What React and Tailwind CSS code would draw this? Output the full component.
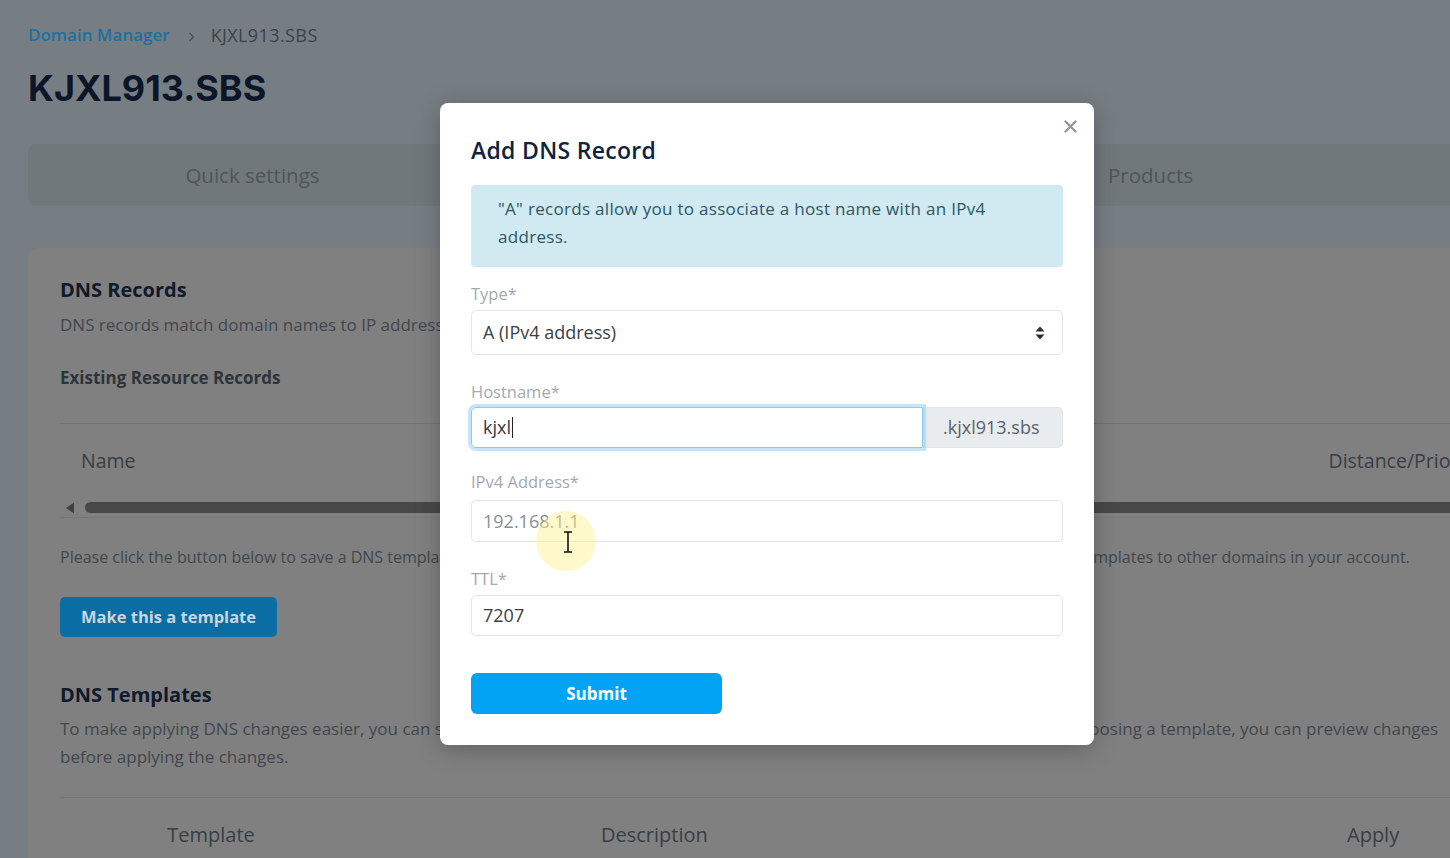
import { useState } from 'react'

const FONT = "font-['Open_Sans','Noto_Sans',sans-serif]"

function CloseIcon() {
  return (
    <svg width="13" height="13" viewBox="0 0 13 13" className="text-[#8f97a1]">
      <path d="M1.5 1.5 L11.5 11.5 M11.5 1.5 L1.5 11.5" stroke="currentColor" strokeWidth="2.4" strokeLinecap="round" />
    </svg>
  )
}

function SortCaret() {
  return (
    <svg width="10" height="14" viewBox="0 0 10 14" className="text-[#2b2f33]">
      <path d="M5 0.5 L9.5 5.5 H0.5 Z" fill="currentColor" />
      <path d="M5 13.5 L9.5 8.5 H0.5 Z" fill="currentColor" />
    </svg>
  )
}

function Field({ label, className, labelGap, children }) {
  return (
    <div className={`flex flex-col ${className}`}>
      <label className={`text-[16.5px] leading-[20px] text-[#a2a9b1] ${labelGap}`}>{label}</label>
      {children}
    </div>
  )
}

export default function App() {
  const [ttl, setTtl] = useState('7207')

  return (
    <div className={`relative w-full h-[858px] overflow-hidden bg-[#777e83] ${FONT}`}>
      {/* page behind the dialog, shown dimmed */}
      <div className="w-[1900px] pl-[28px] pt-[24px] flex flex-col">
        <div className="flex items-center text-[17px] leading-[22px]">
          <span className="text-[#1f6f9e] font-semibold">Domain Manager</span>
          <svg width="7" height="10" viewBox="0 0 7 10" className="ml-[18px] mr-[16px] mt-[3px] text-[#4a5056]">
            <path d="M1.5 1 L5.5 5 L1.5 9" stroke="currentColor" strokeWidth="1.4" fill="none" />
          </svg>
          <span className="text-[#3c4248] text-[18px] tracking-[0.4px]">KJXL913.SBS</span>
        </div>
        <h1 className="mt-[20px] text-[36px] leading-[44px] font-bold text-[#0c1629] font-['Inter',sans-serif]">KJXL913.SBS</h1>

        <div className="mt-[34px] w-[1796px] h-[62px] rounded-[8px] bg-[#71787c] flex">
          {['Quick settings', 'DNS', 'Products', 'Advanced'].map((t, i) => (
            <div key={t} className={`w-[449px] flex items-center justify-center text-[20.5px] ${i === 1 ? 'text-[#71787c]' : 'text-[#4d545a]'}`}>{t}</div>
          ))}
        </div>

        <div className="mt-[42px] w-[1500px] h-[700px] rounded-[10px] bg-[#808080] px-[32px] pt-[28px]">
          <h2 className="text-[20px] leading-[28px] font-bold text-[#101a2b]">DNS Records</h2>
          <p className="mt-[9px] text-[17px] leading-[24px] text-[#41474d] whitespace-nowrap">DNS records match domain names to IP addresses, telling browsers where your website and services live.</p>
          <h3 className="mt-[29px] text-[17px] leading-[24px] font-bold text-[#2d343b]">Existing Resource Records</h3>

          <div className="mt-[33px] w-[1420px] border-t border-[#747474]">
            <div className="h-[74px] flex items-center text-[19.5px] text-[#383e44]">
              <span className="pl-[21px] w-[1271px]">Name</span>
              <span>Distance/Priority</span>
            </div>
            <div className="h-[20px] flex items-center border-b border-[#777777]">
              <svg width="10" height="12" viewBox="0 0 10 12" className="ml-[5px] text-[#404040]">
                <path d="M9 0.5 V11.5 L1 6 Z" fill="currentColor" />
              </svg>
              <div className="ml-[10px] flex-1 h-[11px] rounded-full bg-[#484848]" />
            </div>
          </div>

          <p className="mt-[28px] text-[16px] leading-[22px] text-[#41474d] whitespace-nowrap">Please click the button below to save a DNS template of your current records. Once saved, you will then be able to apply your saved DNS templates to other domains in your account.</p>

          <button className="mt-[29px] h-[40px] w-[217px] rounded-[5px] bg-[#0a6ea4] text-[#c9d6df] text-[16.5px] font-bold">Make this a template</button>

          <h2 className="mt-[44px] text-[20px] leading-[28px] font-bold text-[#101a2b]">DNS Templates</h2>
          <p className="mt-[6px] w-[1420px] text-[17px] leading-[28px] text-[#41474d]">
            <span className="whitespace-nowrap">To make applying DNS changes easier, you can save new templates from existing records and apply them to any domain. When choosing a template, you can preview changes</span>
            <br />
            before applying the changes.
          </p>

          <div className="mt-[26px] w-[1420px] border-t border-[#777777] h-[74px] flex items-center text-[20px] text-[#383e44]">
            <span className="w-[302px] text-center">Template</span>
            <span className="ml-[239px] w-[106px] text-center">Description</span>
            <span className="ml-[640px]">Apply</span>
          </div>
        </div>
      </div>

      {/* dialog */}
      <div className="absolute left-[440px] top-[103px] w-[654px] rounded-[8px] bg-white px-[31px] pt-[31px] pb-[31px] shadow-[0_4px_24px_rgba(0,0,0,0.25)]">
        <button className="absolute right-[16px] top-[16px] p-[1px]"><CloseIcon /></button>
        <h2 className="text-[23px] leading-[32px] font-semibold tracking-[0.3px] text-[#0f2240]">Add DNS Record</h2>

        <div className="mt-[19px] h-[82px] rounded-[4px] bg-[#d1e9f0] px-[27px] pt-[10px] text-[17px] tracking-[0.3px] leading-[28px] text-[#2b5866]">
          "A" records allow you to associate a host name with an IPv4<br />address.
        </div>

        <Field label="Type*" className="mt-[17px]" labelGap="mb-[6px]">
          <div className="h-[45px] rounded-[5px] border border-[#e2e5e9] flex items-center pl-[11px] pr-[17px] text-[18px] text-[#3b4045]">
            <span>A (IPv4 address)</span>
            <span className="ml-auto"><SortCaret /></span>
          </div>
        </Field>

        <Field label="Hostname*" className="mt-[27px]" labelGap="mb-[5px]">
          <div className="flex h-[41px]">
            <div className="relative flex-1 rounded-l-[5px] border border-[#8ccbf1] shadow-[0_0_0_3px_rgba(150,210,245,0.55)] flex items-center pl-[11px] z-10 text-[18px] text-[#34393e]">
              kjxl<span className="ml-[1px] w-[1.5px] h-[21px] bg-[#222]" />
            </div>
            <div className="w-[140px] rounded-r-[5px] bg-[#e9ecef] border border-[#e2e5e9] border-l-0 flex items-center pl-[20px] text-[18px] text-[#5c6268]">.kjxl913.sbs</div>
          </div>
        </Field>

        <Field label="IPv4 Address*" className="mt-[24px]" labelGap="mb-[8px]">
          <div className="h-[42px] rounded-[5px] border border-[#e2e5e9] flex items-center pl-[11px]">
            <input placeholder="192.168.1.1" className="w-full outline-none text-[18px] placeholder:text-[#8a9096]" />
          </div>
        </Field>

        <Field label="TTL*" className="mt-[27px]" labelGap="mb-[6px]">
          <div className="h-[41px] rounded-[5px] border border-[#e2e5e9] flex items-center pl-[11px]">
            <input value={ttl} onChange={e => setTtl(e.target.value)} className="w-full outline-none text-[18px] text-[#3b4045]" />
          </div>
        </Field>

        <button className="mt-[37px] w-[251px] h-[41px] rounded-[6px] bg-[#02a3f4] text-white text-[17px] font-bold">Submit</button>
      </div>

      {/* recorded mouse pointer highlight */}
      <div className="absolute left-[536px] top-[511px] w-[60px] h-[60px] rounded-full bg-[rgba(255,240,140,0.45)] pointer-events-none" />
      <svg width="10" height="22" viewBox="0 0 10 22" className="absolute left-[563px] top-[531px] pointer-events-none">
        <path d="M1 1 H9 M5 1 V21 M1 21 H9" stroke="#111" strokeWidth="1.6" fill="none" />
      </svg>
    </div>
  )
}
